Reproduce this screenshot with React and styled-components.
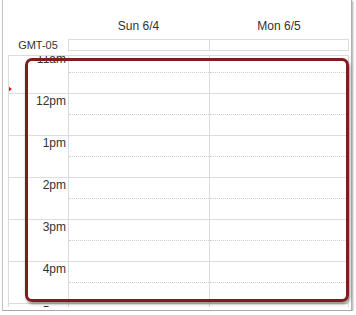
import styled, { createGlobalStyle } from "styled-components";

const GlobalStyle = createGlobalStyle`
  body {
    margin: 0;
    background: #fff;
  }
  * {
    box-sizing: border-box;
    font-family: "Liberation Sans", Arial, sans-serif;
  }
`;

const days = ["Sun 6/4", "Mon 6/5"];
const hours = ["11am", "12pm", "1pm", "2pm", "3pm", "4pm", "5pm"];

function App() {
  return (
    <Frame>
      <GlobalStyle />
      <DayHeads>
        <span />
        {days.map((d) => (
          <DayName key={d}>{d}</DayName>
        ))}
      </DayHeads>

      <AllDayRow>
        <Zone>GMT-05</Zone>
        <AllDayBox>
          <AllDayCell />
          <AllDayCell $last />
        </AllDayBox>
      </AllDayRow>

      <Scroller>
        <NowMarker />
        <Rows>
          {hours.map((h) => (
            <HourRow key={h}>
              <HourLabel>{h}</HourLabel>
              {days.map((d, i) => (
                <Slot key={d} $last={i === days.length - 1}>
                  <HalfHour />
                </Slot>
              ))}
            </HourRow>
          ))}
        </Rows>
      </Scroller>

      <Highlight />
    </Frame>
  );
}

export default App;

const Frame = styled.div`
  position: relative;
  margin-left: 2px;
  width: 350px;
  height: 311px;
  padding-left: 5px;
  border-left: 1px solid #c8c8c8;
  border-right: 1px solid #b0b0b0;
  border-bottom: 1px solid #a8a8a8;
  box-shadow: 1px 1px 2px rgba(0, 0, 0, 0.35);
  background: #fff;
`;

const DayHeads = styled.div`
  display: grid;
  grid-template-columns: 60px 141px 140px;
  height: 39px;
  align-items: end;
  padding-bottom: 6px;
`;

const DayName = styled.div`
  text-align: center;
  font-size: 12px;
  line-height: 14px;
  color: #333;
`;

const AllDayRow = styled.div`
  display: grid;
  grid-template-columns: 60px 281px;
  height: 12px;
  margin-bottom: 4px;
`;

const Zone = styled.div`
  text-align: center;
  font-size: 11px;
  line-height: 12px;
  color: #333;
`;

const AllDayBox = styled.div`
  display: grid;
  grid-template-columns: 141px 1fr;
  border: 1px solid #dcdcdc;
`;

const AllDayCell = styled.div`
  border-right: ${(p) => (p.$last ? "none" : "1px solid #dcdcdc")};
`;

const Scroller = styled.div`
  position: relative;
  width: 341px;
  height: 252px;
  overflow: hidden;
  border-top: 1px solid #dcdcdc;
  border-left: 1px solid #dcdcdc;
  border-right: 1px solid #dcdcdc;
`;

const Rows = styled.div`
  margin-top: -5px;
`;

const HourRow = styled.div`
  display: grid;
  grid-template-columns: 60px 141px 1fr;
  height: 42px;
  border-top: 1px solid #dcdcdc;
`;

const HourLabel = styled.div`
  border-right: 1px solid #dcdcdc;
  text-align: right;
  padding-right: 2px;
  font-size: 12px;
  line-height: 14px;
  color: #333;
`;

const Slot = styled.div`
  border-right: ${(p) => (p.$last ? "none" : "1px solid #dcdcdc")};
`;

const HalfHour = styled.div`
  height: 21px;
  border-bottom: 1px dotted #cfcfcf;
`;

const NowMarker = styled.div`
  position: absolute;
  left: -1px;
  top: 30px;
  z-index: 1;
  width: 0;
  height: 0;
  border-top: 3px solid transparent;
  border-bottom: 3px solid transparent;
  border-left: 4px solid #d01818;
`;

const Highlight = styled.div`
  position: absolute;
  left: 22px;
  top: 58px;
  width: 324px;
  height: 244px;
  border: 3px solid #801c1c;
  border-radius: 7px;
  box-shadow: 1px 2px 3px rgba(0, 0, 0, 0.45);
  pointer-events: none;
`;
